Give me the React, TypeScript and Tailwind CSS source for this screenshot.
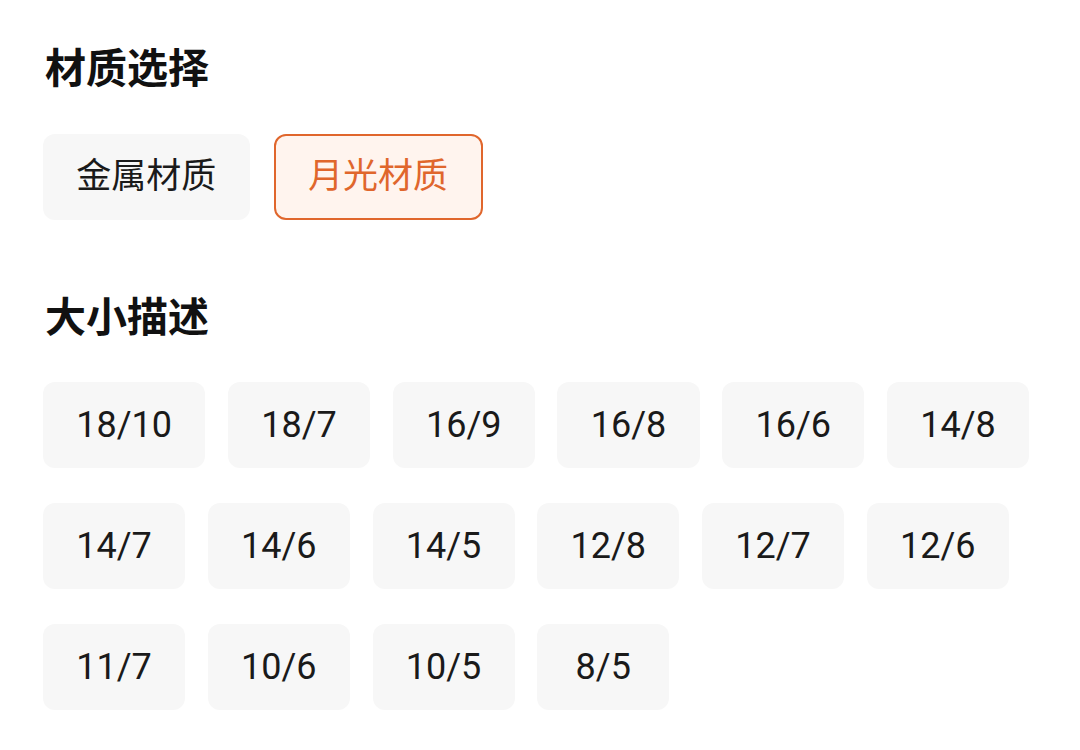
const sizes = [
  "18/10", "18/7", "16/9", "16/8", "16/6", "14/8",
  "14/7", "14/6", "14/5", "12/8", "12/7", "12/6",
  "11/7", "10/6", "10/5", "8/5",
];

const rows = [sizes.slice(0, 6), sizes.slice(6, 12), sizes.slice(12)];

function Chip({ label, active = false, size = "text-[36px]" }: { label: string; active?: boolean; size?: string }) {
  return (
    <div
      className={
        (active
          ? "flex h-[86px] min-w-[132px] items-center justify-center rounded-[12px] border-2 border-[#e0662c] bg-[#fff4ee] px-[32.5px] text-[#e0662c] "
          : "flex h-[86px] min-w-[132px] items-center justify-center rounded-[12px] bg-[#f7f7f7] px-[33.3px] text-[#1a1a1a] ") + size
      }
    >
      {label}
    </div>
  );
}

export default function App() {
  return (
    <div
      className="min-h-screen bg-white px-[43px] pt-[45px]"
      style={{ fontFamily: "Roboto, 'Noto Sans CJK SC', sans-serif" }}
    >
      <h2 className="pl-[2px] text-[41px] font-bold leading-[48px] text-[#111]">材质选择</h2>
      <div className="mt-[41px] flex gap-[24px]">
        <Chip label="金属材质" size="text-[35px]" />
        <Chip label="月光材质" size="text-[35px]" active />
      </div>

      <h2 className="mt-[74px] pl-[2px] text-[41px] font-bold leading-[48px] text-[#111]">大小描述</h2>
      <div className="mt-[40px] flex flex-col gap-[35px]">
        {rows.map((row, i) => (
          <div key={i} className="flex gap-[22.6px]">
            {row.map((s) => (
              <Chip key={s} label={s} />
            ))}
          </div>
        ))}
      </div>
    </div>
  );
}
